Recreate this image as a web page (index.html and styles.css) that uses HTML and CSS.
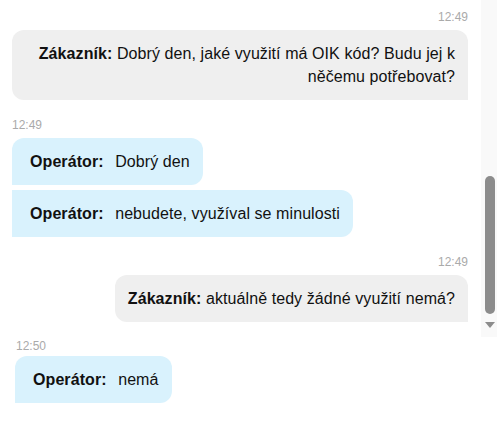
FILE: index.html
```html
<!DOCTYPE html>
<html lang="cs">
<head>
    <meta charset="UTF-8">
    <meta name="viewport" content="width=device-width, initial-scale=1.0">
    <title>Chat</title>
    <link rel="stylesheet" href="styles.css">
</head>
<body>
    <div class="viewport">
        <div class="messages">
            <div class="group group-right">
                <div class="stamp">12:49</div>
                <div class="bubble bubble-customer">
                    <b>Zákazník:</b> Dobrý den, jaké využití má OIK kód? Budu jej k něčemu potřebovat?
                </div>
            </div>
            <div class="group group-left">
                <div class="stamp">12:49</div>
                <div class="bubble bubble-operator first"><b class="label">Operátor:</b> Dobrý den</div>
                <div class="bubble bubble-operator"><b class="label">Operátor:</b> nebudete, využíval se minulosti</div>
            </div>
            <div class="group group-right">
                <div class="stamp">12:49</div>
                <div class="bubble bubble-customer"><b>Zákazník:</b> aktuálně tedy žádné využití nemá?</div>
            </div>
        </div>
        <div class="scrollbar">
            <div class="thumb"></div>
            <div class="arrow"></div>
        </div>
    </div>
    <div class="tail">
        <div class="group group-left">
            <div class="stamp">12:50</div>
            <div class="bubble bubble-operator first"><b class="label">Operátor:</b> nemá</div>
        </div>
    </div>
</body>
</html>
```

FILE: styles.css
```css
*{
    margin: 0;
    padding: 0;
    box-sizing: border-box;
}
body{
    width: 497px;
    height: 428px;
    background: #fff;
    color: #111;
    font-family: "Liberation Sans", Arial, sans-serif;
    font-size: 16px;
    overflow: hidden;
}
.viewport{
    display: flex;
    height: 337px;
}
.messages{
    flex: 1;
    padding: 9px 13px 0 12px;
    display: flex;
    flex-direction: column;
    gap: 17px;
}
.group{
    display: flex;
    flex-direction: column;
    gap: 5px;
}
.group-right{
    align-items: flex-end;
}
.group-left{
    align-items: flex-start;
}
.stamp{
    font-size: 12px;
    line-height: 16px;
    color: #aaa;
}
.bubble{
    line-height: 23px;
    padding: 12px 13px;
    letter-spacing: 0.08px;
}
.bubble-customer{
    background: #efefef;
    border-radius: 12px 12px 0 12px;
    text-align: right;
}
.bubble-operator{
    background: #d9f2fd;
    border-radius: 0 12px 12px 0;
    padding-left: 18px;
}
.bubble-operator.first{
    border-radius: 12px 12px 12px 0;
}
.label{
    margin-right: 7px;
}
/* fake scrollbar */
.scrollbar{
    width: 16px;
    background: #f9f9f9;
    display: flex;
    flex-direction: column;
    align-items: center;
    padding-top: 176px;
}
.thumb{
    width: 10px;
    height: 138px;
    margin-left: 1px;
    border-radius: 5px;
    background: #8c8c8c;
}
.arrow{
    margin-top: 8px;
    margin-left: 1px;
    width: 0;
    height: 0;
    border-left: 5px solid transparent;
    border-right: 5px solid transparent;
    border-top: 6px solid #8c8c8c;
}
.tail{
    padding: 1px 0 0 15px;
}
.tail .stamp{
    padding-left: 1px;
}
.tail .group{
    gap: 2px;
}
```
